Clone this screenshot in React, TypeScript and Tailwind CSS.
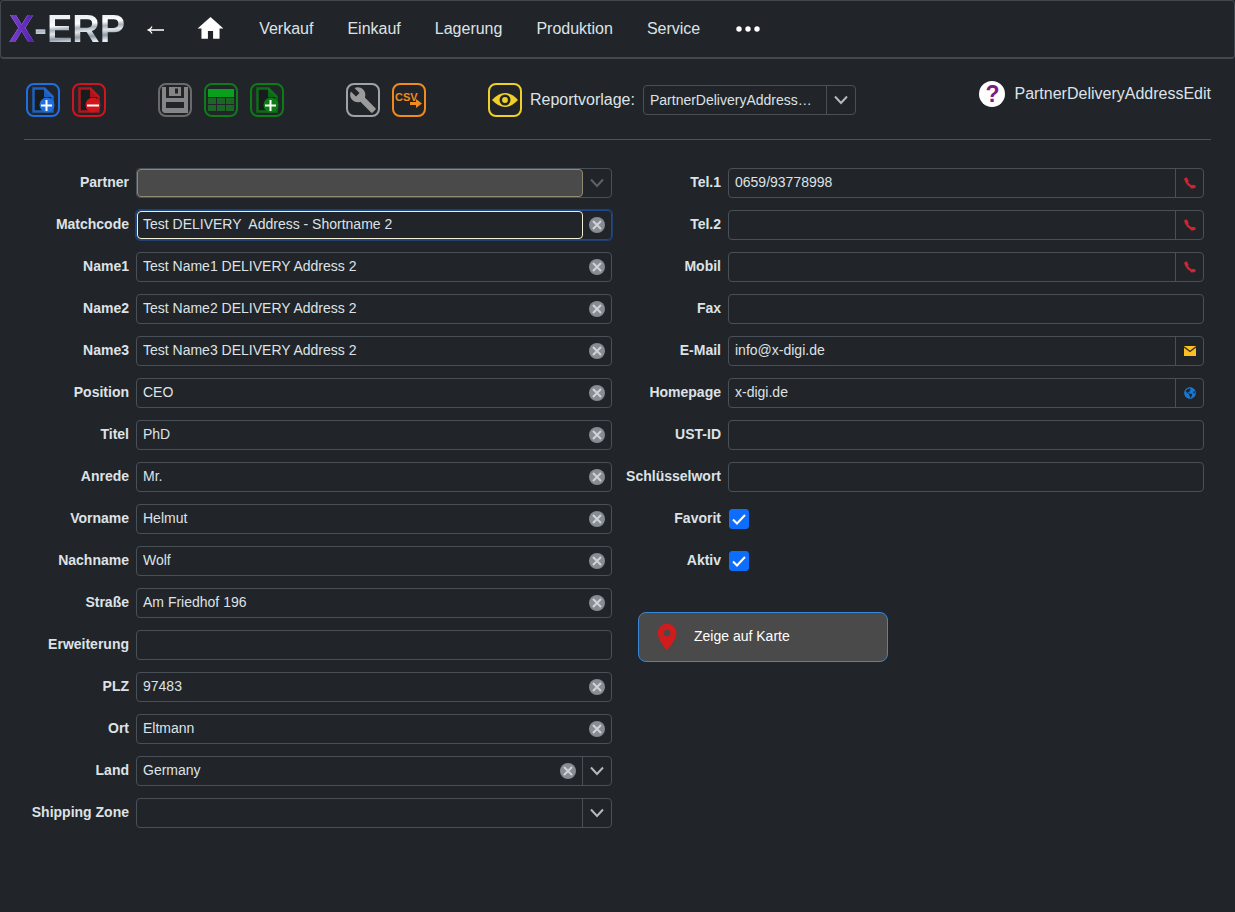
import type { ReactNode } from "react";
import { MdBuild, MdHome, MdLocationOn } from "react-icons/md";
import { FaGlobeAmericas } from "react-icons/fa";

const NAV = ["Verkauf", "Einkauf", "Lagerung", "Produktion", "Service"];

const ADDRESS = [
    { id: "name1", label: "Name1", value: "Test Name1 DELIVERY Address 2" },
    { id: "name2", label: "Name2", value: "Test Name2 DELIVERY Address 2" },
    { id: "name3", label: "Name3", value: "Test Name3 DELIVERY Address 2" },
    { id: "position", label: "Position", value: "CEO" },
    { id: "titel", label: "Titel", value: "PhD" },
    { id: "anrede", label: "Anrede", value: "Mr." },
    { id: "vorname", label: "Vorname", value: "Helmut" },
    { id: "nachname", label: "Nachname", value: "Wolf" },
    { id: "strasse", label: "Straße", value: "Am Friedhof 196" },
    { id: "erweiterung", label: "Erweiterung", value: "" },
    { id: "plz", label: "PLZ", value: "97483" },
    { id: "ort", label: "Ort", value: "Eltmann" },
];

const phone = (
    <svg className="size-3" viewBox="0 0 12 12" fill="none" stroke="#d3232f" strokeLinecap="round">
        <path d="M2 2.5Q3 8.500 9.500 10" strokeWidth="2.200" />
        <path d="M2 2.300L2.800 4M8 9.800L10 9.600" strokeWidth="3.400" />
    </svg>
);

const mail = (
    <svg className="h-2.5 w-3" viewBox="0 0 12 10">
        <path d="M0 0h12v10H0z" fill="#fcbf24" />
        <path d="M0 .8l6 4.700L12 .8" fill="none" stroke="#3a3320" strokeWidth="1.300" />
    </svg>
);

const CONTACT = [
    { id: "tel1", label: "Tel.1", value: "0659/93778998", action: "Anrufen", icon: phone },
    { id: "tel2", label: "Tel.2", value: "", action: "Anrufen", icon: phone },
    { id: "mobil", label: "Mobil", value: "", action: "Anrufen", icon: phone },
    { id: "fax", label: "Fax", value: "" },
    { id: "email", label: "E-Mail", value: "info@x-digi.de", action: "E-Mail senden", icon: mail },
    { id: "homepage", label: "Homepage", value: "x-digi.de", action: "Homepage öffnen", icon: <FaGlobeAmericas className="size-3 text-[#1a78d0]" /> },
    { id: "ustid", label: "UST-ID", value: "" },
    { id: "keyword", label: "Schlüsselwort", value: "" },
];

function Chevron() {
    return (
        <svg className="h-2.5 w-3.5" viewBox="0 0 14 10" fill="none" stroke="currentColor" strokeWidth="2">
            <path d="M1 1.500l6 6.500 6-6.500" />
        </svg>
    );
}

function ClearButton({ label }: { label: string }) {
    return (
        <button type="button" aria-label={`${label} leeren`} className="flex w-7 shrink-0 items-center justify-center">
            <svg className="size-4" viewBox="0 0 16 16">
                <circle cx="8" cy="8" r="8" fill="#878d93" />
                <path d="M4 4l8 8M12 4l-8 8" stroke="#cfd3d8" strokeWidth="2" />
            </svg>
        </button>
    );
}

function Row({ id, label, children }: { id: string; label: string; children: ReactNode }) {
    return (
        <div className="flex h-[30px] gap-[7px]">
            <label htmlFor={id} className="w-[105px] shrink-0 text-right text-sm leading-7 font-bold whitespace-nowrap">
                {label}
            </label>
            {children}
        </div>
    );
}

function TextField({ id, label, value, clearable, focused, action, icon }: {
    id: string;
    label: string;
    value: string;
    clearable?: boolean;
    focused?: boolean;
    action?: string;
    icon?: ReactNode;
}) {
    return (
        <Row id={id} label={label}>
            <div className={focused
                ? "flex min-w-0 flex-1 rounded-sm border border-[#1c4a8c] ring-1 ring-[#20416f]"
                : "flex min-w-0 flex-1 rounded-sm border border-[#495057]"}>
                <input
                    id={id}
                    type="text"
                    defaultValue={value}
                    className={focused
                        ? "min-w-0 flex-1 rounded-sm border border-[#f3f0d8] px-[5px] pb-0.5 text-sm outline-none"
                        : "min-w-0 flex-1 px-1.5 pb-0.5 text-sm outline-none"}
                />
                {clearable && value && <ClearButton label={label} />}
                {icon && (
                    <button type="button" aria-label={action} className="flex w-7 shrink-0 items-center justify-center border-l border-[#495057]">
                        {icon}
                    </button>
                )}
            </div>
        </Row>
    );
}

// 34px framed toolbar button, the frame takes the svg's text colour
function Tool({ label, className, children }: { label: string; className: string; children: ReactNode }) {
    return (
        <button type="button" aria-label={label} title={label} className={className}>
            <svg className="size-[34px]" viewBox="0 0 34 34" fill="none">
                <rect x="1" y="1" width="32" height="32" rx="7" stroke="currentColor" strokeWidth="2" />
                {children}
            </svg>
        </button>
    );
}

function Page({ minus }: { minus?: boolean }) {
    return (
        <>
            <path d="M7.500 5.500h11l8 8v15h-19z" fill="#000" fillOpacity="0.3" stroke="currentColor" strokeWidth="2.500" opacity="0.8" />
            <path d="M18 4.500l9.500 9.500H18z" fill="currentColor" opacity="0.8" />
            <circle cx="21" cy="22" r="7.500" fill="currentColor" />
            <path d={minus ? "M15 22.500h12" : "M15 22.500h11M20.500 17v11"} stroke="#fff" strokeWidth="2" />
        </>
    );
}

function Check({ id, label }: { id: string; label: string }) {
    return (
        <Row id={id} label={label}>
            <span className="relative mt-[5px] ml-px size-5">
                <input id={id} type="checkbox" defaultChecked className="peer block size-5 appearance-none rounded-[3px] border border-[#0d6efd] checked:bg-[#0d6efd]" />
                <svg className="pointer-events-none absolute inset-0 hidden size-5 peer-checked:block" viewBox="0 0 20 20" fill="none" stroke="#fff" strokeWidth="2">
                    <path d="M4 10.500l4 4L16 6" />
                </svg>
            </span>
        </Row>
    );
}

export default function App() {
    return (
        <div className="min-h-screen bg-[#212529] font-['Liberation_Sans',Arial,sans-serif] text-[#dee2e6]">
            <header className="flex h-[59px] items-center rounded-sm border border-b-2 border-[#43484e] pb-px pl-2">
                <a href="#" className="bg-[linear-gradient(90deg,#7a3fd0_0,#5420b0_25px,transparent_26px),linear-gradient(175deg,#eef2f5_32%,#ffffff_42%,#a9b3bd_50%,#dfe5ea_58%,#8f9aa6_68%,#e8edf1_78%)] bg-clip-text text-[38px] leading-[42px] font-bold text-transparent">
                    X-ERP
                </a>
                <button type="button" aria-label="Zurück" className="ml-[22px]">
                    <svg className="h-3 w-[18px]" viewBox="0 0 18 12" fill="none" stroke="#fff" strokeWidth="1.300">
                        <path d="M1 7h16M5 3.500Q4 6 1 7q3 1 4 3.500" />
                    </svg>
                </button>
                <a href="#" aria-label="Startseite" className="ml-[30px]">
                    <MdHome className="size-[31px] text-white" />
                </a>
                <nav className="ml-[33px] flex items-center gap-[34px]">
                    {NAV.map((item) => (
                        <a key={item} href="#">{item}</a>
                    ))}
                    <button type="button" aria-label="Mehr" className="pl-0.5">
                        <svg className="h-1.5 w-6" viewBox="0 0 24 6" fill="#fff">
                            <circle cx="3" cy="3" r="2.700" />
                            <circle cx="12" cy="3" r="2.700" />
                            <circle cx="21" cy="3" r="2.700" />
                        </svg>
                    </button>
                </nav>
            </header>

            <div className="mx-6 flex h-[81px] items-center border-b border-[#4d5257] pt-0.5">
                <div className="flex gap-3 pl-0.5">
                    <Tool label="Neu" className="text-[#1f6fe0]"><Page /></Tool>
                    <Tool label="Löschen" className="text-[#d0151c]"><Page minus /></Tool>
                </div>
                <div className="ml-[52px] flex gap-3">
                    <Tool label="Speichern" className="text-[#6a6a6a]">
                        <path d="M4 4h4v11h18V4h4v26H6l-2-2z" fill="#858585" />
                        <path d="M11 4h12v9H11z" fill="#858585" />
                        <path d="M17 5.500h3v5h-3z" fill="#212529" />
                        <path d="M8 19h18v6H8z" fill="#212529" />
                    </Tool>
                    <Tool label="Tabelle" className="text-[#0f7a1a]">
                        <rect x="4" y="6" width="26" height="8" fill="#08a01c" />
                        <path d="M4 15h8v6H4zM13 15h8v6h-8zM22 15h8v6h-8zM4 22h8v6H4zM13 22h8v6h-8zM22 22h8v6h-8z" fill="#1d6427" />
                    </Tool>
                    <Tool label="Kopieren" className="text-[#0b7d14]"><Page /></Tool>
                </div>
                <div className="ml-[62px] flex gap-3">
                    <Tool label="Werkzeuge" className="text-[#a0a3a6]">
                        <MdBuild x="3" y="3" size={28} color="#9b9b9b" />
                    </Tool>
                    <Tool label="CSV Export" className="text-[#f08a1d]">
                        <text x="3" y="18" fill="currentColor" fontSize="11" fontWeight="bold">CSV</text>
                        <path d="M18 19h6v-3l6 4.500-6 4.500v-3h-6z" fill="currentColor" />
                    </Tool>
                </div>
                <div className="ml-[62px] flex items-center gap-2">
                    <Tool label="Vorschau" className="text-[#f0d028]">
                        <path d="M4 17Q17 3 30 17 17 31 4 17z" fill="currentColor" />
                        <circle cx="17" cy="17" r="4.200" fill="currentColor" stroke="#212529" strokeWidth="2.600" />
                        <circle cx="17" cy="17" r="2" fill="currentColor" />
                    </Tool>
                    <label htmlFor="report">Reportvorlage:</label>
                    <div className="relative h-[30px] w-[213px] rounded-sm border border-[#495057] text-sm">
                        <select id="report" className="size-full appearance-none pr-8 pl-1.5 outline-none">
                            <option>PartnerDeliveryAddress…</option>
                        </select>
                        <span className="pointer-events-none absolute inset-y-0 right-0 flex w-[29px] items-center justify-center border-l border-[#495057] text-[#b4b9be]">
                            <Chevron />
                        </span>
                    </div>
                </div>
                <div className="ml-auto flex items-center gap-[9px] pb-3">
                    <button type="button" aria-label="Hilfe" className="size-[26px] rounded-full bg-white text-[23px] leading-[26px] font-bold text-[#7d1b84]">?</button>
                    <h1>PartnerDeliveryAddressEdit</h1>
                </div>
            </div>

            <form className="grid grid-cols-2 items-start gap-x-1 pt-7 pr-[31px] pb-6 pl-6">
                <div className="flex flex-col gap-3">
                    <Row id="partner" label="Partner">
                        <div className="relative min-w-0 flex-1 rounded-sm border border-[#495057] pr-7">
                            <select id="partner" disabled className="block size-full appearance-none rounded-sm border border-[#8e8b70] bg-[#4a4a4a]" />
                            <span className="pointer-events-none absolute inset-y-0 right-0 flex w-7 items-center justify-center text-[#5c6268]">
                                <Chevron />
                            </span>
                        </div>
                    </Row>
                    <TextField id="matchcode" label="Matchcode" value="Test DELIVERY  Address - Shortname 2" clearable focused />
                    {ADDRESS.map((field) => (
                        <TextField key={field.id} {...field} clearable />
                    ))}
                    <Row id="land" label="Land">
                        <div className="relative flex min-w-0 flex-1 rounded-sm border border-[#495057] pr-[29px]">
                            <select id="land" className="min-w-0 flex-1 appearance-none px-1.5 pb-0.5 text-sm outline-none">
                                <option>Germany</option>
                            </select>
                            <ClearButton label="Land" />
                            <span className="pointer-events-none absolute inset-y-0 right-0 flex w-[29px] items-center justify-center border-l border-[#495057] text-[#b4b9be]">
                                <Chevron />
                            </span>
                        </div>
                    </Row>
                    <Row id="zone" label="Shipping Zone">
                        <div className="relative flex min-w-0 flex-1 rounded-sm border border-[#495057]">
                            <select id="zone" className="min-w-0 flex-1 appearance-none px-1.5 text-sm outline-none" />
                            <span className="pointer-events-none absolute inset-y-0 right-0 flex w-[29px] items-center justify-center border-l border-[#495057] text-[#b4b9be]">
                                <Chevron />
                            </span>
                        </div>
                    </Row>
                </div>

                <div className="flex flex-col gap-3">
                    {CONTACT.map((field) => (
                        <TextField key={field.id} {...field} />
                    ))}
                    <Check id="favorit" label="Favorit" />
                    <Check id="aktiv" label="Aktiv" />
                    <button type="button" className="mt-6 ml-[22px] flex h-[50px] w-[250px] items-center rounded-lg border border-[#3a86d8] bg-[#4a4a4a] pl-3 text-sm text-white">
                        <MdLocationOn className="size-8 text-[#d01c1c]" />
                        <span className="ml-[11px] pb-0.5">Zeige auf Karte</span>
                    </button>
                </div>
            </form>
        </div>
    );
}
